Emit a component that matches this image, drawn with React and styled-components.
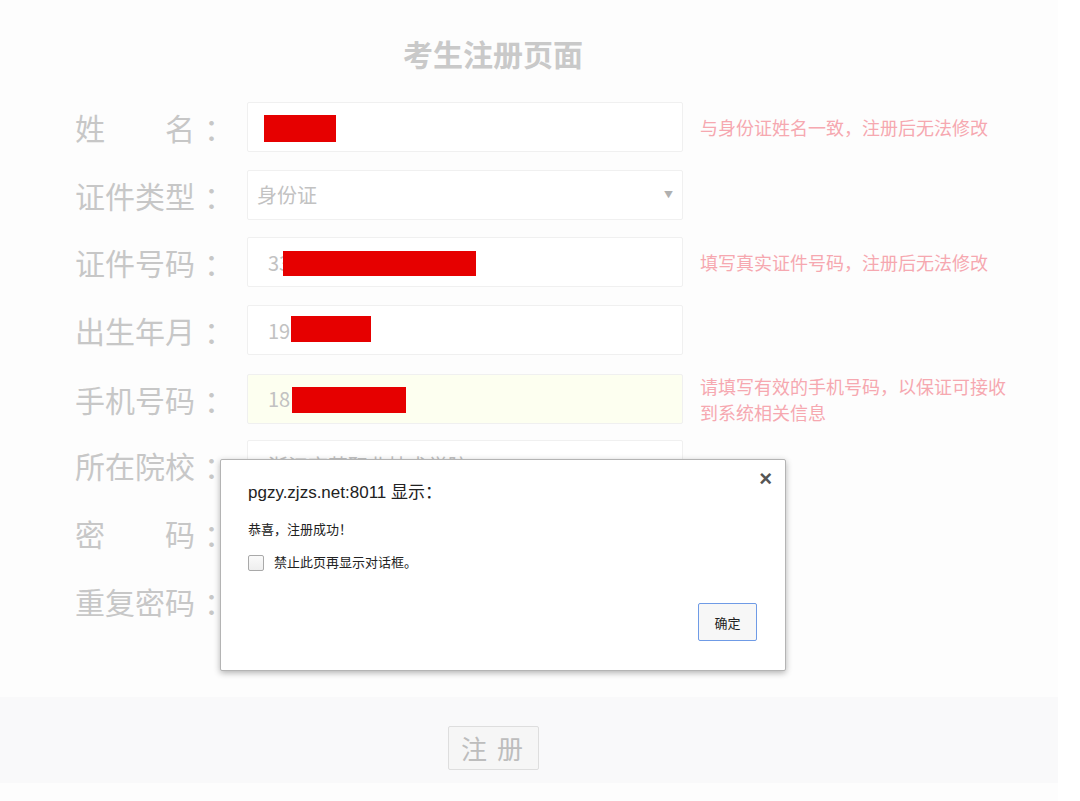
import React from "react";
import styled, { createGlobalStyle } from "styled-components";

const GlobalStyle = createGlobalStyle`
    body
    {
        margin: 0;
        background: #ffffff;
        font-family: "Noto Sans CJK SC", "Noto Sans", sans-serif;
    }
`;

const rows = [
    { label: "姓名", spread: true, value: "", redact: { left: 16, top: 12, width: 72, height: 27 }, hint: "与身份证姓名一致，注册后无法修改" },
    { label: "证件类型", select: true, value: "身份证" },
    { label: "证件号码", value: "33", redact: { left: 35, top: 13, width: 193, height: 25 }, hint: "填写真实证件号码，注册后无法修改" },
    { label: "出生年月", value: "19", redact: { left: 43, top: 10, width: 80, height: 26 } },
    { label: "手机号码", value: "18", autofill: true, redact: { left: 44, top: 12, width: 114, height: 26 }, hint: "请填写有效的手机号码，以保证可接收到系统相关信息" },
    { label: "所在院校", value: "浙江育英职业技术学院" },
    { label: "密码", spread: true, value: "" },
    { label: "重复密码", value: "" },
];


const FormRow = ({ row }) =>
{
    return(
        <Row>
            <Label>
                <LabelText $spread={row.spread}>{row.label}</LabelText>
                <Colon>：</Colon>
            </Label>
            <Field $autofill={row.autofill} $select={row.select}>
                {row.value}
                {row.select && <Arrow>▼</Arrow>}
                {row.redact && (
                    <Redact
                        style={{ left: row.redact.left, top: row.redact.top, width: row.redact.width, height: row.redact.height }}
                    />
                )}
            </Field>
            {row.hint && <Hint>{row.hint}</Hint>}
        </Row>
    )
}


const AlertDialog = () =>
{
    return(
        <Dialog>
            <Close>×</Close>
            <DialogTitle>pgzy.zjzs.net:8011 显示：</DialogTitle>
            <Message>恭喜，注册成功！</Message>
            <CheckLine>
                <CheckBox />
                <span>禁止此页再显示对话框。</span>
            </CheckLine>
            <DialogFooter>
                <OkButton>确定</OkButton>
            </DialogFooter>
        </Dialog>
    )
}


const App = () =>
{
    return(
        <>
            <GlobalStyle />
            <Page>
                <FormArea>
                    <Title>考生注册页面</Title>
                    <Rows>
                        {rows.map((row) => <FormRow key={row.label} row={row} />)}
                    </Rows>
                </FormArea>
                <Footer>
                    <FooterInner>
                        <SubmitButton>注 册</SubmitButton>
                    </FooterInner>
                </Footer>
                <AlertDialog />
            </Page>
        </>
    )
}


export default App;

const Page = styled.div`
    position: relative;
    width: 1058px;
    height: 801px;
    background: #fdfdfd;
`;

const FormArea = styled.div`
    width: 986px;
    padding-top: 33px;
`;

const Title = styled.h1`
    margin: 0;
    text-align: center;
    font-size: 30px;
    line-height: 40px;
    font-weight: 700;
    color: #c9c9c9;
`;

const Rows = styled.div`
    display: flex;
    flex-direction: column;
    gap: 17.7px;
    margin-top: 29px;
    padding-left: 75px;
`;

const Row = styled.div`
    display: grid;
    grid-template-columns: 172px 436px 330px;
    align-items: center;
    height: 50px;
`;

const Label = styled.div`
    display: flex;
    align-items: center;
    font-size: 30px;
    line-height: 40px;
    color: #c7c7c7;
`;

const LabelText = styled.span`
    width: 120px;
    text-align: ${({ $spread }) => $spread ? "justify" : "left"};
    text-align-last: ${({ $spread }) => $spread ? "justify" : "auto"};
    white-space: nowrap;
`;

const Colon = styled.span`
    margin-left: 9px;
`;

const Field = styled.div`
    position: relative;
    box-sizing: border-box;
    height: 50px;
    display: flex;
    align-items: center;
    padding-left: ${({ $select }) => $select ? "9px" : "20px"};
    border: 1px solid #f0f0f0;
    border-radius: 2px;
    background: ${({ $autofill }) => $autofill ? "#fdfff0" : "#ffffff"};
    font-size: 20px;
    color: #c2c2c2;
    overflow: hidden;
    white-space: nowrap;
`;

const Arrow = styled.span`
    position: absolute;
    right: 9px;
    top: 17px;
    font-size: 9px;
    color: #b0b0b0;
`;

const Redact = styled.span`
    position: absolute;
    background: #e60000;
`;

const Hint = styled.div`
    margin-left: 17px;
    font-size: 18px;
    line-height: 26px;
    color: #f6a8b0;
`;

const Footer = styled.div`
    position: absolute;
    left: 0;
    right: 0;
    top: 697px;
    height: 86px;
    background: #f9f9fa;
    display: flex;
    align-items: flex-start;
    padding-top: 29px;
    box-sizing: border-box;
`;

const FooterInner = styled.div`
    width: 986px;
    display: flex;
    justify-content: center;
`;

const SubmitButton = styled.button`
    box-sizing: border-box;
    width: 91px;
    height: 44px;
    border: 1px solid #dedede;
    border-radius: 2px;
    background: #f6f6f6;
    font-family: "Noto Sans CJK SC", sans-serif;
    font-size: 26px;
    line-height: 1;
    color: #bdbdbd;
    letter-spacing: 2px;
    padding: 0;
`;

const Dialog = styled.div`
    position: absolute;
    left: 220px;
    top: 459px;
    box-sizing: border-box;
    width: 566px;
    height: 212px;
    padding: 22px 27px 0;
    background: #ffffff;
    border: 1px solid #b4b4b4;
    border-radius: 2px;
    box-shadow: 0 2px 6px rgba(0, 0, 0, 0.3);
    color: #222222;
    font-family: "Liberation Sans", "Noto Sans CJK SC", sans-serif;
`;

const Close = styled.span`
    position: absolute;
    right: 13px;
    top: 6px;
    font-size: 22px;
    font-weight: 700;
    color: #555555;
`;

const DialogTitle = styled.div`
    font-size: 17px;
    line-height: 22px;
`;

const Message = styled.div`
    margin-top: 17px;
    font-size: 13px;
    line-height: 18px;
`;

const CheckLine = styled.label`
    display: flex;
    align-items: center;
    gap: 10px;
    margin-top: 15px;
    font-size: 13px;
    line-height: 18px;
`;

const CheckBox = styled.span`
    box-sizing: border-box;
    width: 16px;
    height: 16px;
    border: 1px solid #a9a9a9;
    border-radius: 2px;
    background: linear-gradient(#fafafa, #eeeeee);
`;

const DialogFooter = styled.div`
    display: flex;
    justify-content: flex-end;
    margin-top: 31px;
    padding-right: 1px;
`;

const OkButton = styled.button`
    box-sizing: border-box;
    width: 59px;
    height: 38px;
    border: 1px solid #6f9be6;
    border-radius: 2px;
    background: #f7f7f7;
    font-family: "Noto Sans CJK SC", sans-serif;
    font-size: 13px;
    color: #222222;
    padding: 0;
`;
